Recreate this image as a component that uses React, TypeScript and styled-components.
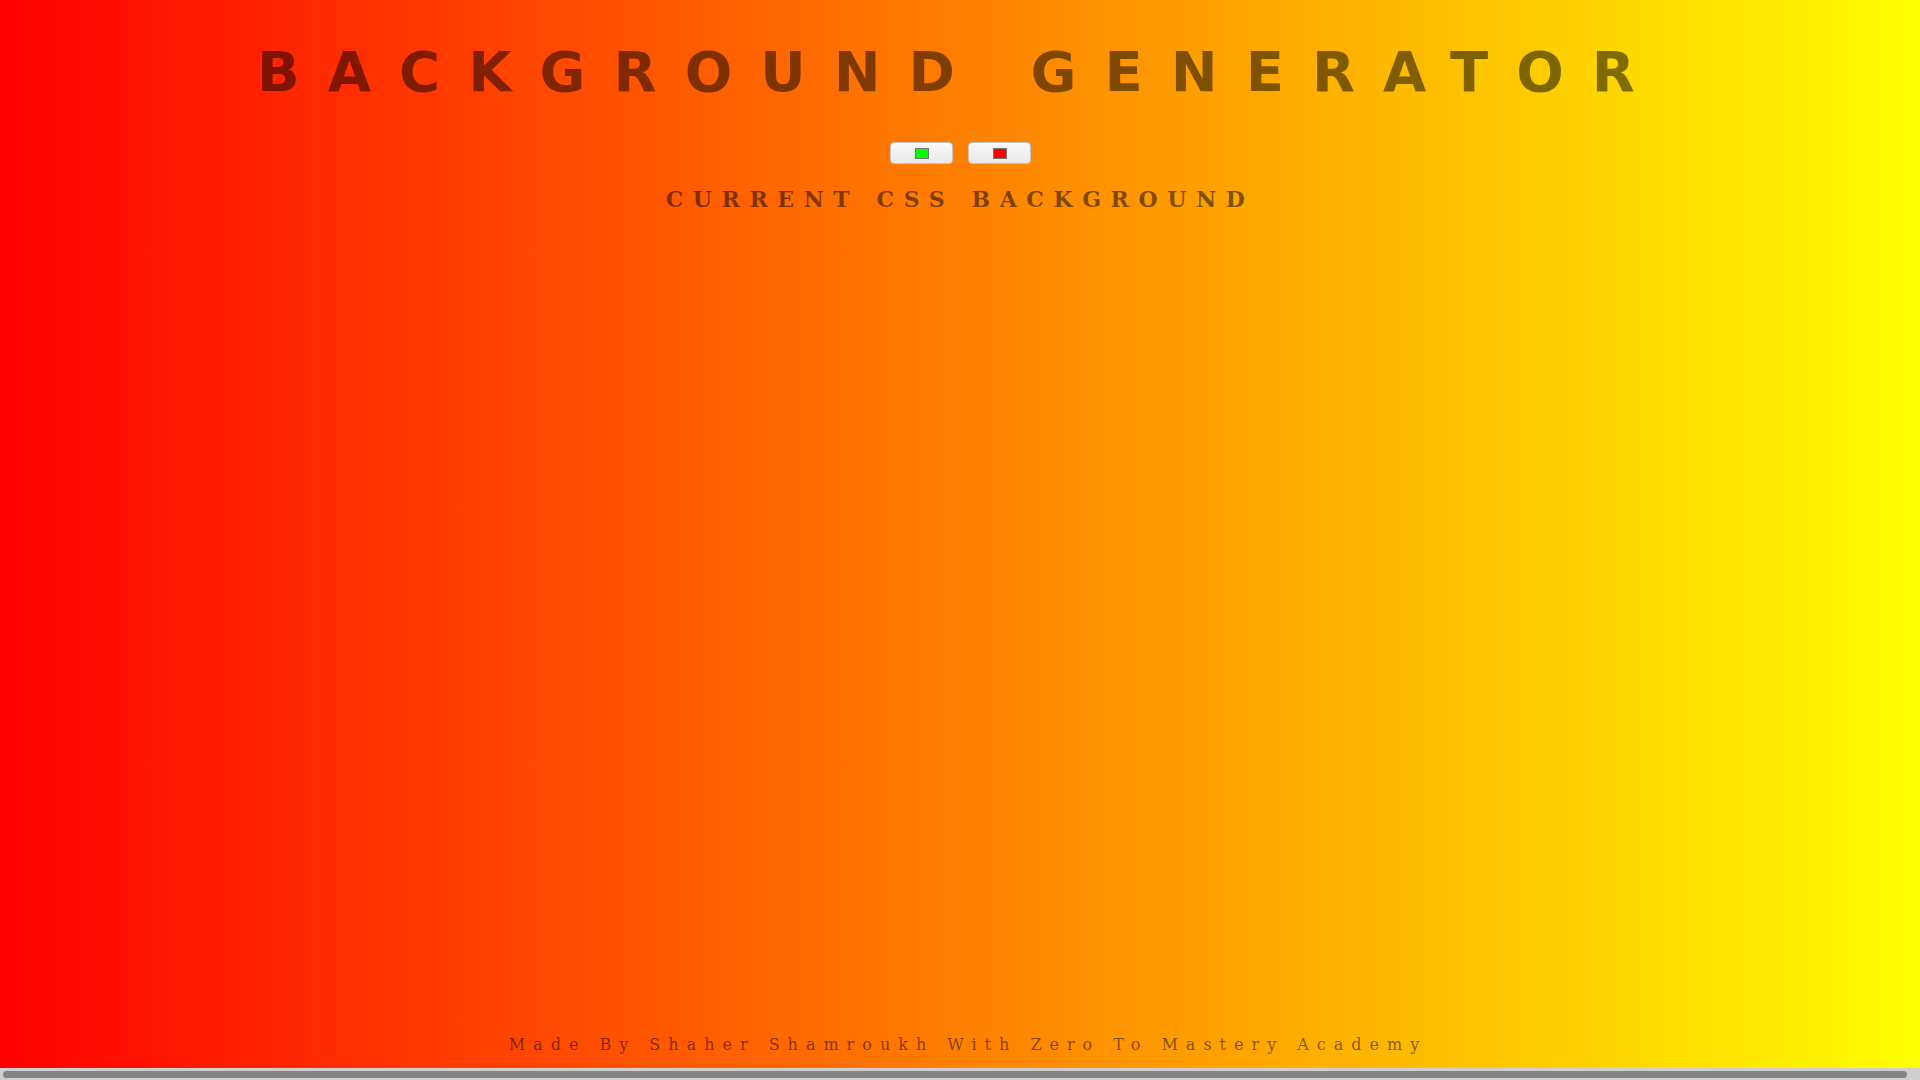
import React, { useState } from "react";
import styled, { createGlobalStyle } from "styled-components";

const GlobalStyle = createGlobalStyle`
  html, body, #root {
    height: 100%;
  }
  body {
    margin: 0;
    background: linear-gradient(to right, #ff0000, #ffff00);
    font-family: "DejaVu Serif", serif;
  }
`;

const Page = styled.div`
  box-sizing: border-box;
  min-height: 100%;
  display: flex;
  flex-direction: column;
  align-items: center;
  text-align: center;
  padding-bottom: 12px;
`;

const Title = styled.h1`
  margin: 39px 0 38px;
  font-family: "DejaVu Sans", sans-serif;
  font-weight: bold;
  font-size: 56px;
  line-height: normal;
  letter-spacing: 0.5em;
  color: rgba(0, 0, 0, 0.5);
`;

const Pickers = styled.div`
  display: flex;
  gap: 15px;
  justify-content: center;
`;

const ColorInput = styled.input.attrs({ type: "color" })`
  -webkit-appearance: none;
  appearance: none;
  box-sizing: border-box;
  width: 63px;
  height: 22px;
  padding: 0;
  margin: 0;
  border: 1px solid #c4c4c4;
  border-radius: 4px;
  background: linear-gradient(#f8f8f8, #e9e9e9);
  cursor: pointer;

  &::-webkit-color-swatch-wrapper {
    padding: 5px 23px 4px 24px;
  }
  &::-webkit-color-swatch {
    border: 1px solid #777777;
    border-radius: 0;
  }
`;

const Subtitle = styled.h3`
  margin: 22px 0 0;
  font-family: "DejaVu Serif", serif;
  font-weight: bold;
  font-size: 22px;
  line-height: normal;
  letter-spacing: 9.6px;
  color: rgba(0, 0, 0, 0.5);
`;

const Footer = styled.footer`
  margin-top: auto;
  align-self: stretch;
  box-sizing: border-box;
  padding: 0 0 14px 16px;
  text-align: center;
  font-family: "DejaVu Serif", serif;
  font-size: 16px;
  line-height: normal;
  letter-spacing: 0.5em;
  color: rgba(0, 0, 0, 0.5);
`;

const ScrollTrack = styled.div`
  position: fixed;
  left: 0;
  right: 0;
  bottom: 0;
  height: 12px;
  box-sizing: border-box;
  padding: 3px 13px 2px 3px;
  background: #cfcfcf;
  display: flex;
`;

const ScrollThumb = styled.div`
  flex: 1;
  height: 7px;
  border-radius: 4px;
  background: #838585;
`;

export default function App() {
  const [c1, setC1] = useState("#00ff00");
  const [c2, setC2] = useState("#ff0000");
  return (
    <>
      <GlobalStyle />
      <Page>
        <Title>BACKGROUND GENERATOR</Title>
        <Pickers>
          <ColorInput value={c1} onChange={(e) => setC1(e.target.value)} />
          <ColorInput value={c2} onChange={(e) => setC2(e.target.value)} />
        </Pickers>
        <Subtitle>CURRENT CSS BACKGROUND</Subtitle>
        <Footer>Made By Shaher Shamroukh With Zero To Mastery Academy</Footer>
      </Page>
      <ScrollTrack aria-hidden="true">
        <ScrollThumb />
      </ScrollTrack>
    </>
  );
}
